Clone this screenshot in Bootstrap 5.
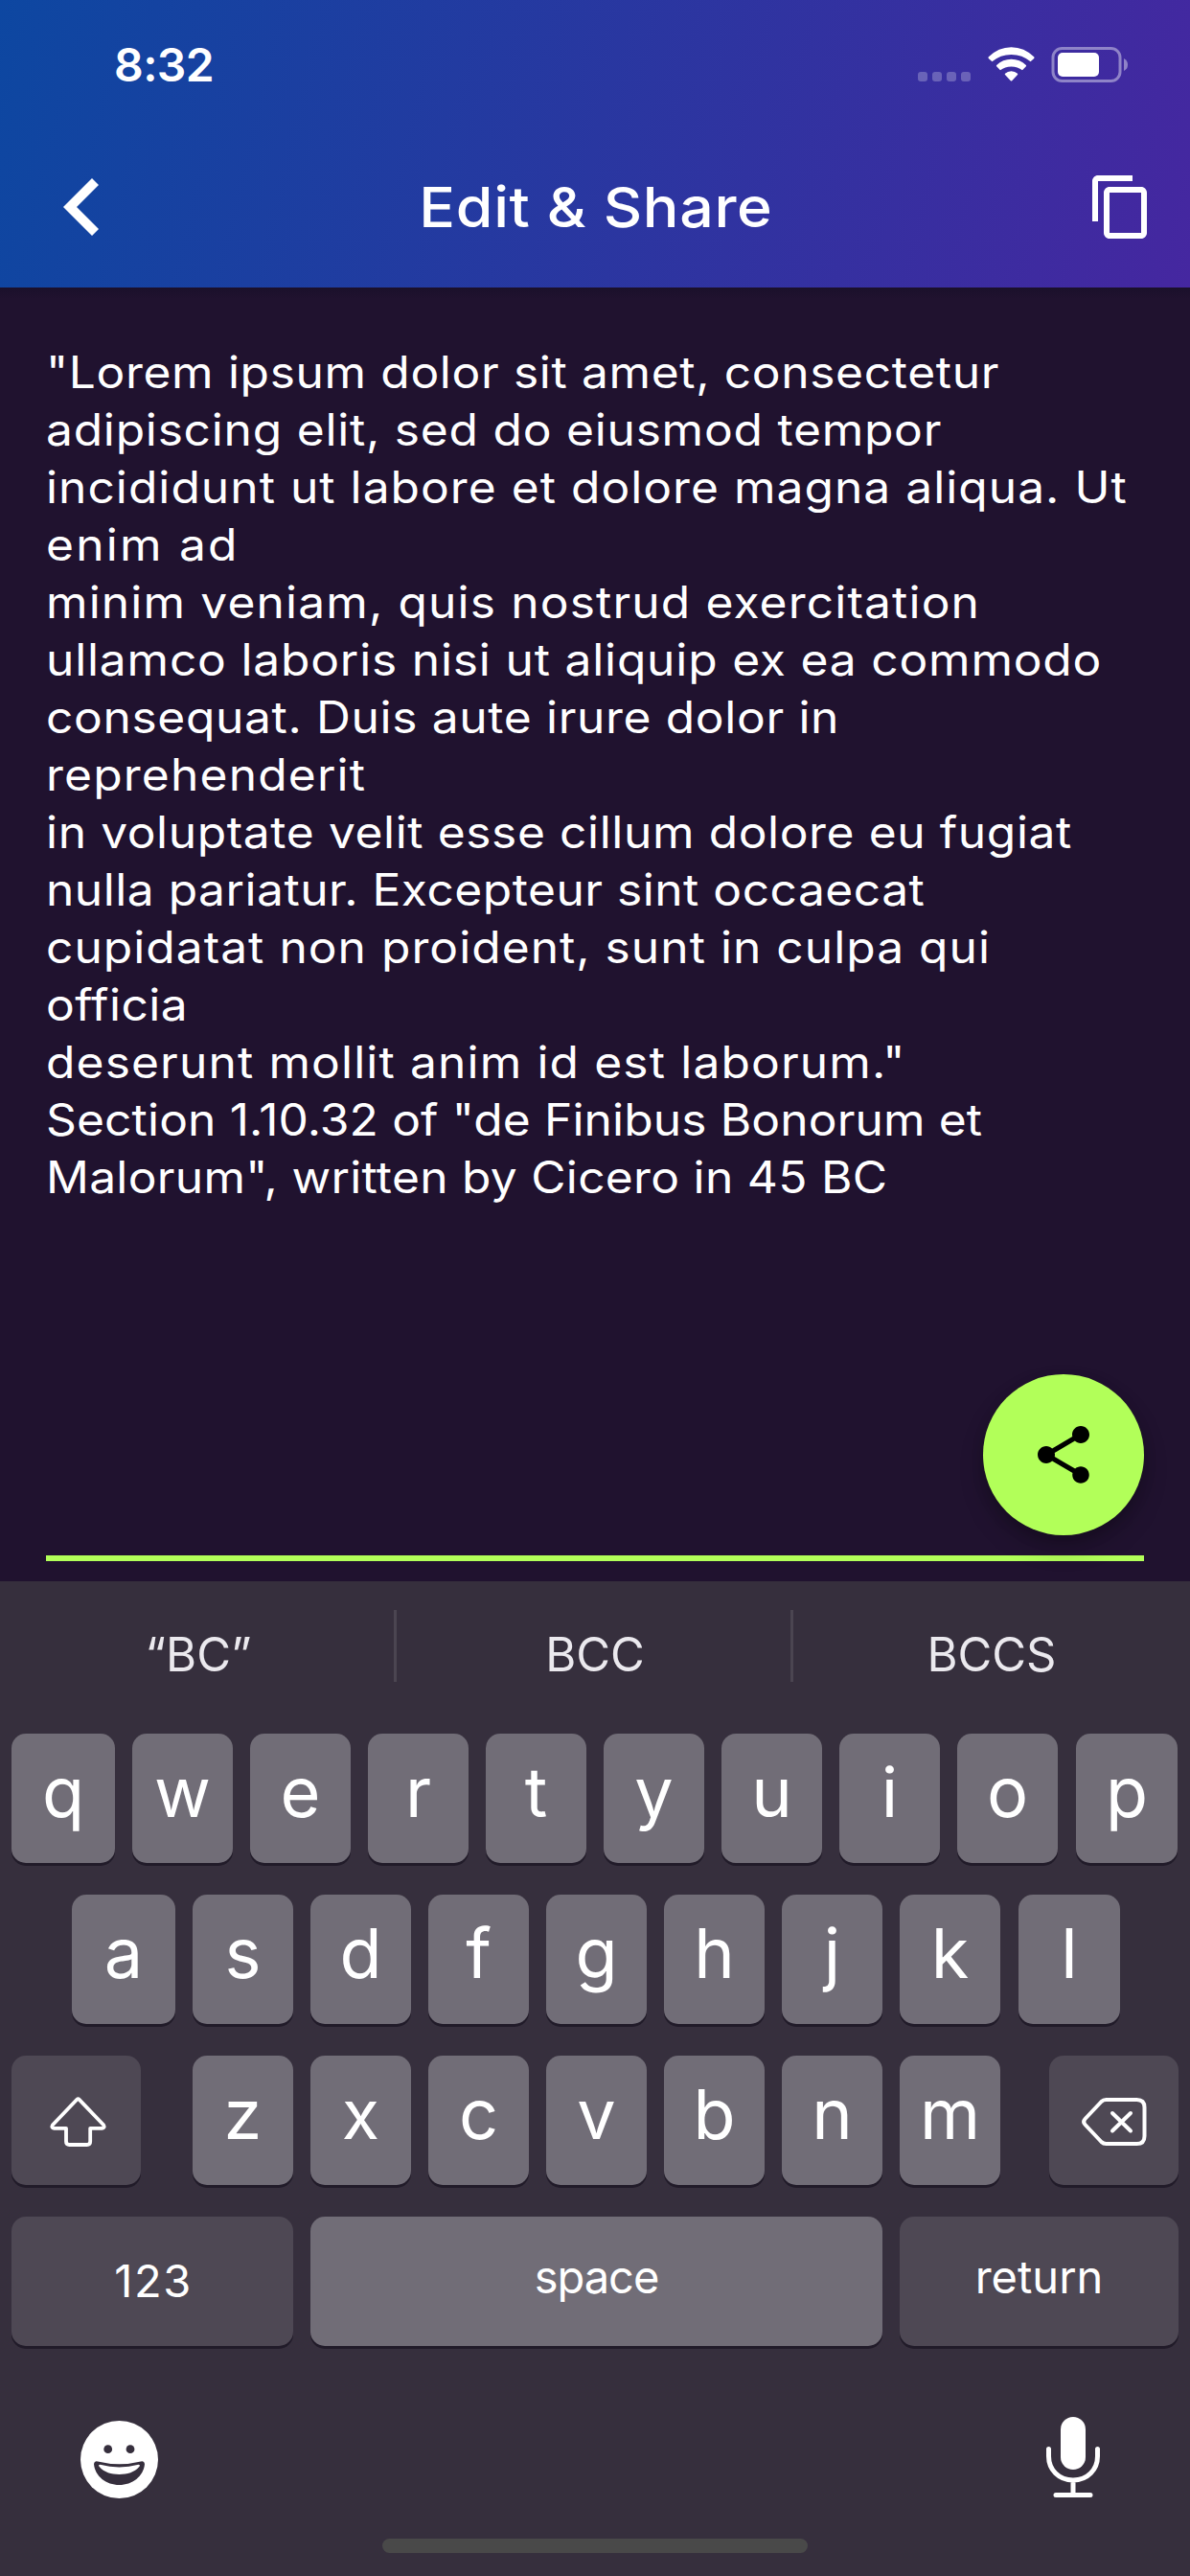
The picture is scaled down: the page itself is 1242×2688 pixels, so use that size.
<!DOCTYPE html>
<html lang="en">
<head>
<meta charset="utf-8">
<meta name="viewport" content="width=device-width, initial-scale=1">
<title>Edit &amp; Share</title>
<link href="https://cdn.jsdelivr.net/npm/bootstrap@5.3.0/dist/css/bootstrap.min.css" rel="stylesheet">
<style>
  body { width: 1242px; height: 2688px; background: #20122f; color: #fff; font-family: Inter, "Liberation Sans", sans-serif; overflow: hidden; }
  svg { display: block; flex: none; }
  .app-head { height: 300px; background: linear-gradient(103.58deg, #0d47a1, #4527a0); }
  .status { height: 132px; padding: 0 65px 0 119px; }
  .clock { font-size: 48px; font-weight: 600; line-height: 135px; letter-spacing: -.6px; }
  .toolbar { height: 168px; padding: 0 36px; }
  .title { font-size: 58px; font-weight: 500; line-height: 168px; letter-spacing: .59px; padding-left: 1px; transform: scaleX(1.08); }
  .editor { height: 1350px; padding: 58px 0 21px; background: linear-gradient(#1a102b, #20122f 12px); }
  .note { height: 1271px; margin: 0 48px; border-bottom: 6px solid #b2ff59; font-size: 46px; line-height: 60px; white-space: nowrap; }
  .note div { transform: scaleX(1.08); transform-origin: 0 0; letter-spacing: .6px; }
  .note div:nth-child(2) { letter-spacing: .71px; }
  .note div:nth-child(3) { letter-spacing: .95px; }
  .note div:nth-child(4) { letter-spacing: 2.05px; }
  .note div:nth-child(5) { letter-spacing: 1.06px; }
  .note div:nth-child(6) { letter-spacing: .75px; }
  .note div:nth-child(8) { letter-spacing: 1.09px; }
  .note div:nth-child(9) { letter-spacing: .56px; }
  .note div:nth-child(10) { letter-spacing: .47px; }
  .note div:nth-child(11) { letter-spacing: .95px; }
  .note div:nth-child(12) { letter-spacing: .4px; }
  .note div:nth-child(13) { letter-spacing: 1.05px; }
  .note div:nth-child(14) { letter-spacing: .12px; }
  .note div:nth-child(15) { letter-spacing: .27px; }
  .fab { position: absolute; right: 48px; bottom: 48px; width: 168px; height: 168px; background: #b2ff59; box-shadow: 0 14px 26px rgba(0,0,0,.2), 0 6px 14px rgba(0,0,0,.14); }
  .keyboard { height: 1038px; background: #362f3d; }
  .suggest { height: 159px; font-size: 49px; line-height: 154px; color: #ebe9ee; }
  .suggest .sep { width: 3px; height: 75px; margin: 30px 0 0 -3px; background: #4b4551; }
  .krow { gap: 18px; height: 135px; margin-bottom: 33px; padding-left: 12px; }
  .krow.inset { padding-left: 75px; }
  .key { flex: none; width: 105px; height: 135px; border-radius: 15px; background: #716d77; box-shadow: 0 3px 0 #211b29; text-align: center; font-size: 72px; font-weight: 400; line-height: 122px; }
  .key.first { width: 108px; }
  .key.last { width: 106px; margin-left: 1px; }
  .key.dark { background: #4e4854; }
  .key.shift { width: 135px; margin-right: 36px; }
  .key.del { width: 135px; margin-left: 33px; }
  .key.word { font-size: 47px; line-height: 126px; }
  .key.num { width: 294px; line-height: 134px; letter-spacing: 1.6px; padding-left: 2px; }
  .key.space { width: 597px; letter-spacing: -1px; }
  .key.ret { width: 309px; width: 291px; }
  .kfoot { padding: 40px 94px 0 84px; }
  .homebar { width: 444px; height: 15px; border-radius: 8px; background: #494949; margin: 40px auto 0; }
</style>
</head>
<body class="d-flex flex-column">
  <header class="app-head flex-shrink-0">
    <div class="status d-flex justify-content-between">
      <div class="clock">8:32</div>
      <svg width="219" height="132" viewBox="958 0 219 132">
        <g fill="#fff" fill-opacity=".25"><rect x="958" y="75" width="10" height="10" rx="3"/><rect x="973" y="75" width="10" height="10" rx="3"/><rect x="988" y="75" width="10" height="10" rx="3"/><rect x="1003" y="75" width="10" height="10" rx="3"/></g>
        <g fill="#fff">
          <path d="M1031.6 59.5Q1042 49.2 1055.5 49.2T1079.400 59.5Q1079.800 60.200 1079.200 60.900L1075.600 64.300Q1067 56.900 1055.500 56.900T1035.400 64.300L1031.800 60.900Q1031.200 60.200 1031.600 59.500Z"/>
          <path d="M1040.100 68Q1046.600 61.800 1055.500 61.800T1070.900 68Q1071.400 68.600 1070.900 69.200L1067 73.200Q1062.300 69.400 1055.500 69.400T1044 73.200L1040.100 69.200Q1039.600 68.600 1040.100 68Z"/>
          <path d="M1049 76.700Q1051.700 74.200 1055.500 74.200T1062 76.700Q1062.600 77.300 1062 78L1056.200 84.200Q1055.500 85 1054.800 84.200L1049 78Q1048.400 77.300 1049 76.700Z"/>
          <rect x="1104" y="55" width="43" height="25" rx="5"/>
        </g>
        <rect x="1099" y="50.500" width="70" height="34" rx="9.500" fill="none" stroke="#fff" stroke-opacity=".42" stroke-width="3"/>
        <path d="M1173 61Q1177 63 1177 67.500T1173 74Z" fill="#fff" fill-opacity=".42"/>
      </svg>
    </div>
    <div class="toolbar d-flex justify-content-between align-items-center">
      <svg width="72" height="72" viewBox="36 180 72 72"><path fill="#fff" d="M96 186L103 193L80 216L103 239L96 246L66 216Z"/></svg>
      <div class="title">Edit &amp; Share</div>
      <svg width="72" height="72" viewBox="0 0 24 24"><path fill="#fff" d="M16 1H4c-1.100 0-2 .9-2 2v14h2V3h12V1zm3 4H8c-1.100 0-2 .9-2 2v14c0 1.100.9 2 2 2h11c1.100 0 2-.9 2-2V7c0-1.100-.9-2-2-2zm0 16H8V7h11v14z"/></svg>
    </div>
  </header>

  <main class="editor position-relative flex-shrink-0">
    <div class="note">
      <div>"Lorem ipsum dolor sit amet, consectetur</div>
      <div>adipiscing elit, sed do eiusmod tempor</div>
      <div>incididunt ut labore et dolore magna aliqua. Ut</div>
      <div>enim ad</div>
      <div>minim veniam, quis nostrud exercitation</div>
      <div>ullamco laboris nisi ut aliquip ex ea commodo</div>
      <div>consequat. Duis aute irure dolor in</div>
      <div>reprehenderit</div>
      <div>in voluptate velit esse cillum dolore eu fugiat</div>
      <div>nulla pariatur. Excepteur sint occaecat</div>
      <div>cupidatat non proident, sunt in culpa qui</div>
      <div>officia</div>
      <div>deserunt mollit anim id est laborum."</div>
      <div>Section 1.10.32 of "de Finibus Bonorum et</div>
      <div>Malorum", written by Cicero in 45 BC</div>
    </div>
    <div class="fab rounded-circle d-flex align-items-center justify-content-center">
      <svg width="72" height="72" viewBox="0 0 24 24"><path d="M18 16.080c-.76 0-1.440.3-1.960.77L8.910 12.700c.05-.23.09-.46.09-.7s-.04-.47-.09-.7l7.050-4.110c.54.5 1.250.81 2.040.81 1.660 0 3-1.340 3-3s-1.340-3-3-3-3 1.340-3 3c0 .24.04.47.09.7L8.040 9.810C7.500 9.310 6.790 9 6 9c-1.660 0-3 1.340-3 3s1.340 3 3 3c.79 0 1.500-.31 2.040-.81l7.120 4.160c-.05.21-.08.43-.08.65 0 1.610 1.310 2.920 2.920 2.920s2.920-1.310 2.920-2.920-1.310-2.920-2.920-2.920z"/></svg>
    </div>
  </main>

  <section class="keyboard flex-shrink-0">
    <div class="suggest d-flex text-center">
      <div class="col-4 flex-shrink-0">“BC”</div><div class="sep flex-shrink-0"></div>
      <div class="col-4 flex-shrink-0">BCC</div><div class="sep flex-shrink-0"></div>
      <div class="col-4 flex-shrink-0">BCCS</div>
    </div>
    <div class="krow d-flex">
      <div class="key first">q</div><div class="key">w</div><div class="key">e</div><div class="key">r</div><div class="key">t</div><div class="key">y</div><div class="key">u</div><div class="key">i</div><div class="key">o</div><div class="key last">p</div>
    </div>
    <div class="krow inset d-flex">
      <div class="key first">a</div><div class="key">s</div><div class="key">d</div><div class="key">f</div><div class="key">g</div><div class="key">h</div><div class="key">j</div><div class="key">k</div><div class="key last">l</div>
    </div>
    <div class="krow d-flex">
      <div class="key dark shift"><svg width="135" height="135" viewBox="12 2145 135 135"><path d="M80.300 2190.800Q81.500 2189.600 82.700 2190.800L108 2217.200Q109.800 2220.500 106.500 2220.800H94.200V2234.500Q94.200 2238 90.700 2238H72.500Q69 2238 69 2234.500V2220.800H56.500Q53.200 2220.500 55 2217.200Z" fill="none" stroke="#fff" stroke-width="3.800" stroke-linejoin="round"/></svg></div>
      <div class="key">z</div><div class="key">x</div><div class="key">c</div><div class="key">v</div><div class="key">b</div><div class="key">n</div><div class="key">m</div>
      <div class="key dark del"><svg width="135" height="135" viewBox="1095 2145 135 135"><g fill="none" stroke="#fff" stroke-width="4" stroke-linecap="round" stroke-linejoin="round"><path d="M1154.500 2191H1186.500Q1194.500 2191 1194.500 2199V2229Q1194.500 2237 1186.500 2237H1154.500Q1151.500 2237 1149.500 2235L1132.500 2217Q1129.700 2214 1132.500 2211L1149.500 2193Q1151.500 2191 1154.500 2191Z"/><path d="M1161 2205L1180 2223.500M1180 2205L1161 2223.500"/></g></svg></div>
    </div>
    <div class="krow d-flex">
      <div class="key dark word num">123</div>
      <div class="key word space">space</div>
      <div class="key dark word ret">return</div>
    </div>
    <div class="kfoot d-flex justify-content-between">
      <svg width="81" height="88" viewBox="84 2521 81 88">
        <circle cx="124.500" cy="2566.500" r="40.500" fill="#fff"/>
        <g fill="#362f3d"><circle cx="112.700" cy="2555.700" r="4.400"/><circle cx="136" cy="2555.700" r="4.400"/>
        <path d="M98 2571Q98.500 2567.500 102 2568.500Q124.500 2574 147 2568.500Q150.500 2567.500 151 2571C150 2584 138 2593 124.500 2593S99 2584 98 2571Z"/></g>
        <path fill="#fff" d="M104.500 2571.800Q124.500 2577 144.500 2571.800Q146.700 2571.800 145.500 2573.800C140 2580 133 2582 124.500 2582S109 2580 103.500 2573.800Q102.300 2571.800 104.500 2571.800Z"/>
      </svg>
      <svg width="56" height="88" viewBox="1092 2521 56 88"><rect x="1107" y="2522" width="26" height="55" rx="13" fill="#fff"/><path d="M1094.500 2555.500V2563C1094.500 2577 1105 2588 1120 2588S1145.500 2577 1145.500 2563V2555.500M1120 2588V2603.500M1102 2603.500H1138" fill="none" stroke="#fff" stroke-width="5" stroke-linecap="round"/></svg>
    </div>
    <div class="homebar"></div>
  </section>
<script src="https://cdn.jsdelivr.net/npm/bootstrap@5.3.0/dist/js/bootstrap.bundle.min.js"></script>
</body>
</html>
